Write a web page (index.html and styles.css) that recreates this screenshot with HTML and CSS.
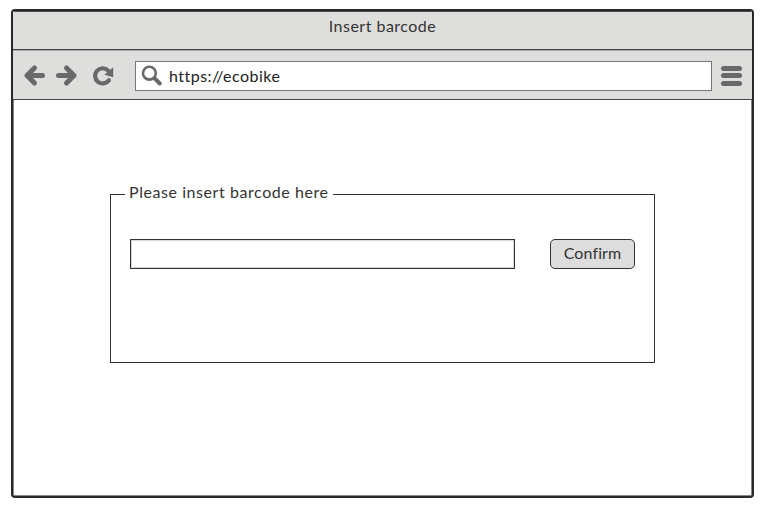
FILE: index.html
```html
<!DOCTYPE html>
<html lang="en">
<head>
<meta charset="utf-8">
<title>Insert barcode</title>
<link rel="stylesheet" href="styles.css">
</head>
<body>
<div class="window">
  <header class="titlebar"><span class="title">Insert barcode</span></header>
  <nav class="toolbar">
    <svg class="nav-icons" width="104" height="30" viewBox="0 0 104 30" fill="none" stroke="#696969" stroke-width="5" stroke-linecap="round" stroke-linejoin="round">
      <path d="M21.500 15.500H6M13.500 8L6 15.500l7.500 7.500"/>
      <path d="M37.500 15.500H53M45.500 8L53 15.500l-7.500 7.500"/>
      <path d="M87.900 20.200A7.600 7.600 0 1 1 87 10.400" stroke-width="4.200"/>
      <path d="M92.200 7.200v10L83.400 14.700Z" fill="#696969" stroke="none"/>
    </svg>
    <div class="address">
      <svg class="search" width="22" height="22" viewBox="0 0 22 22" fill="none" stroke="#696969">
        <circle cx="8.400" cy="8.200" r="6.400" stroke-width="2.600"/>
        <path d="M13.700 13.500L18.800 18.500" stroke-width="4" stroke-linecap="round"/>
      </svg>
      <span class="url">https://ecobike</span>
    </div>
    <div class="menu"><i></i><i></i><i></i></div>
  </nav>
  <main class="page">
    <fieldset class="group">
      <legend><span>Please insert barcode here</span></legend>
      <div class="row">
        <input class="barcode" type="text" aria-label="Barcode">
        <button class="confirm" type="button">Confirm</button>
      </div>
    </fieldset>
  </main>
</div>
</body>
</html>
```
FILE: styles.css
```css
* { box-sizing: border-box; }
body {
  margin: 0;
  padding: 9px 18px 10px 11px;
  background: #fff;
  color: #333;
  font: 16px/20px Lato, "Open Sans", sans-serif;
  font-variant-ligatures: none;
}
.window {
  height: 489px;
  border: 2px solid #282828;
  border-radius: 4px;
  background: #fff;
  box-shadow: inset 0 0 0 1px #858585;
  overflow: hidden;
}
.titlebar {
  height: 39px;
  padding-top: 4px;
  background: #dededd;
  border-top: 1px solid #484848;
  border-bottom: 1px solid #444;
  text-align: center;
}
.title { letter-spacing: .48px; }
.toolbar {
  display: flex;
  height: 50px;
  padding: 10px 9px 0 8px;
  background: #dededc;
  border-bottom: 1px solid #444;
  border-top: 1px solid #aaa;
}
.nav-icons { flex: none; margin-top: -1px; }
.address {
  display: flex;
  width: 577px;
  height: 30px;
  margin-left: 10px;
  background: #fff;
  border: 1px solid #777;
}
.search { margin: 3px 0 0 5px; flex: none; }
.url {
  margin: 4px 0 0 6px;
  color: #222;
  letter-spacing: .47px;
}
.menu {
  display: flex;
  flex-direction: column;
  gap: 2.500px;
  margin: 4.500px 0 0 9px;
}
.menu i {
  width: 21px;
  height: 5px;
  border-radius: 3px;
  background: #696969;
}
.page { padding: 84px 97px 0; }
.group {
  width: 545px;
  height: 179px;
  margin: 0;
  padding: 0 19px;
  border: 1px solid #333;
}
.group legend {
  width: 208px;
  margin-left: -5px;
  padding: 0 0 0 4px;
  letter-spacing: .57px;
  white-space: nowrap;
}
.group legend span {
  display: block;
  margin: -2px 0 2px;
}
.row {
  display: flex;
  justify-content: space-between;
  padding-top: 35px;
}
.barcode {
  width: 385px;
  height: 30px;
  border: 1px solid #333;
  background: #fff;
  box-shadow: inset 0 0 0 1px #d5d5d5;
}
.confirm {
  width: 85px;
  height: 30px;
  padding: 0 0 3px;
  border: 1px solid #333;
  border-radius: 5px;
  background: #ddd;
  color: #333;
  font: inherit;
  letter-spacing: .1px;
}
```
